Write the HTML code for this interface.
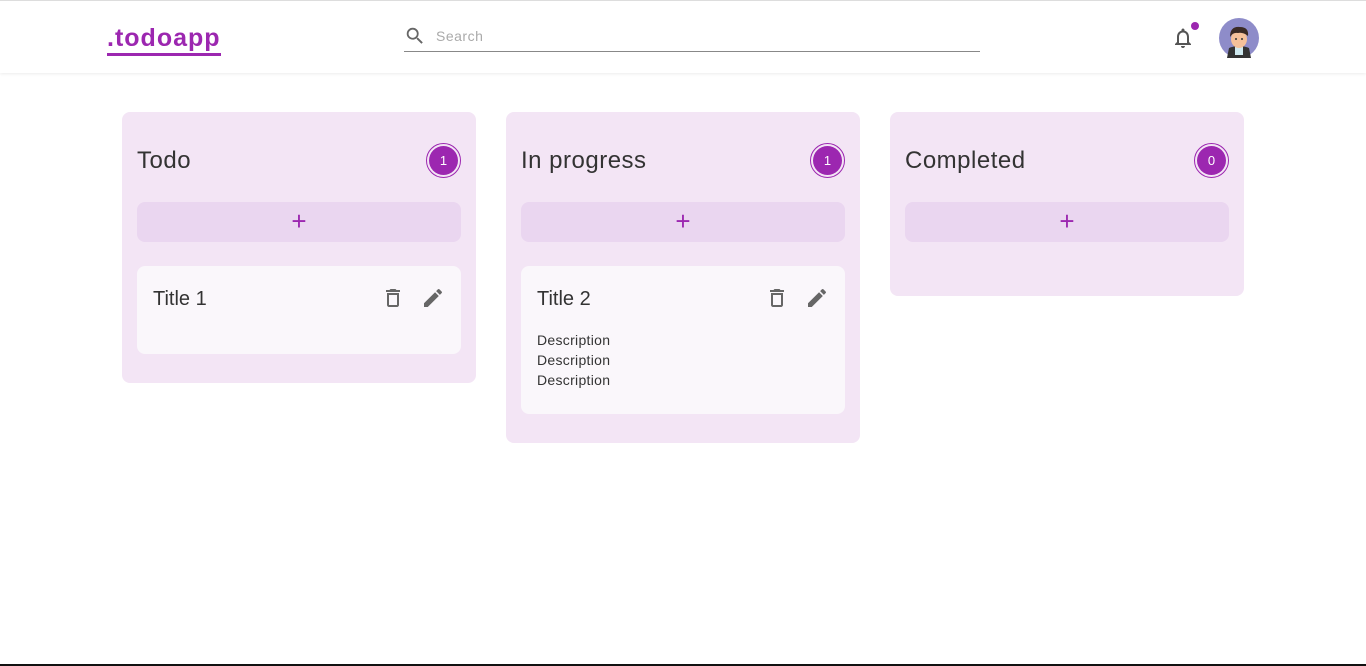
<!DOCTYPE html>
<html><head><style>
*{box-sizing:border-box;margin:0;padding:0}
body{width:1366px;height:666px;overflow:hidden;background:#fff;font-family:"Liberation Sans",sans-serif;position:relative;color:#222}
.hdr{position:absolute;left:0;top:0;width:1366px;height:73px;border-top:1px solid #ddd;box-shadow:0 1px 3px rgba(0,0,0,.08);background:#fff}
.logo{position:absolute;left:107px;top:22px;font-size:25px;font-weight:bold;color:#9c27b0;letter-spacing:1px;border-bottom:3px solid #9c27b0;line-height:30px;width:114px}
.search{position:absolute;left:404px;top:23px;width:576px;height:28px;border-bottom:1px solid #888}
.search span{position:absolute;left:32px;top:4px;font-size:14px;color:#aaa;letter-spacing:.5px}
.col{position:absolute;top:112px;width:354px;background:#f3e5f5;border-radius:8px}
.col h2{position:absolute;left:15px;top:35px;font-size:24px;font-weight:normal;color:#333;letter-spacing:.5px}
.badge{position:absolute;right:15px;top:31px;width:35px;height:35px;border-radius:50%;border:1px solid #9c27b0;padding:2px}
.badge div{width:29px;height:29px;border-radius:50%;background:#9c27b0;color:#fff;font-size:13px;text-align:center;line-height:29px}
.add{position:absolute;left:15px;top:90px;width:324px;height:40px;background:#ead6f0;border-radius:8px;color:#9c27b0;font-size:26px;text-align:center;line-height:38px}
.card{position:absolute;left:15px;top:154px;width:324px;background:#faf7fb;border-radius:8px}
.card h3{position:absolute;left:16px;top:22px;font-size:20px;font-weight:normal;color:#333}
.ic{position:absolute;top:20px}
.desc{position:absolute;left:16px;top:64px;font-size:14px;line-height:20px;color:#333;letter-spacing:.3px}
</style></head><body>
<div class="hdr">
<div class="logo">.todoapp</div>
<div class="search"><svg width="22" height="22" viewBox="0 0 24 24" style="position:absolute;left:0;top:1px"><path fill="#666" d="M15.5 14h-.79l-.28-.27A6.47 6.47 0 0 0 16 9.5 6.5 6.5 0 1 0 9.5 16c1.610 0 3.09-.59 4.23-1.57l.27.28v.79l5 4.99L20.49 19l-4.99-5zm-6 0C7.01 14 5 11.99 5 9.5S7.01 5 9.5 5 14 7.01 14 9.5 11.99 14 9.5 14z"/></svg><span>Search</span></div>
<svg width="24" height="24" viewBox="0 0 24 24" style="position:absolute;left:1171px;top:25px"><path fill="#555" d="M12 22c1.1 0 2-.9 2-2h-4a2 2 0 0 0 2 2zm6-6v-5c0-3.07-1.64-5.640-4.5-6.32V4c0-.83-.67-1.5-1.5-1.5s-1.5.67-1.5 1.5v.68C7.63 5.36 6 7.92 6 11v5l-2 2v1h16v-1l-2-2zm-2 1H8v-6c0-2.48 1.51-4.5 4-4.5s4 2.02 4 4.5v6z"/></svg>
<div style="position:absolute;left:1191px;top:21px;width:8px;height:8px;border-radius:50%;background:#9c27b0"></div>
<svg width="40" height="40" viewBox="0 0 40 40" style="position:absolute;left:1219px;top:17px"><circle cx="20" cy="20" r="20" fill="#8e8cc9"/><path d="M8 40 L10 30 Q20 26 30 30 L32 40Z" fill="#333"/><rect x="16" y="29" width="8" height="8" fill="#cfe9ef"/><ellipse cx="20" cy="21" rx="8" ry="9" fill="#f5c19a"/><path d="M11 19 Q11 8 21 9 Q30 9 29 18 Q24 14 19 15 Q14 14 11 19Z" fill="#3a2a24"/><circle cx="17" cy="21" r="1" fill="#333"/><circle cx="23" cy="21" r="1" fill="#333"/></svg>
</div>

<div class="col" style="left:122px;height:271px">
<h2>Todo</h2><div class="badge"><div>1</div></div><div class="add">+</div>
<div class="card" style="height:88px"><h3>Title 1</h3>
<svg class="ic" style="left:244px" width="24" height="24" viewBox="0 0 24 24"><path fill="#666" d="M6 19c0 1.1.9 2 2 2h8c1.1 0 2-.9 2-2V7H6v12zM8 9h8v10H8V9zm7.5-5l-1-1h-5l-1 1H5v2h14V4z"/></svg>
<svg class="ic" style="left:284px" width="24" height="24" viewBox="0 0 24 24"><path fill="#666" d="M3 17.25V21h3.75L17.81 9.94l-3.75-3.75L3 17.25zM20.71 7.04a1 1 0 0 0 0-1.41l-2.34-2.34a1 1 0 0 0-1.41 0l-1.83 1.83 3.75 3.75 1.83-1.83z"/></svg>
</div></div>

<div class="col" style="left:506px;height:331px">
<h2>In progress</h2><div class="badge"><div>1</div></div><div class="add">+</div>
<div class="card" style="height:148px"><h3>Title 2</h3>
<svg class="ic" style="left:244px" width="24" height="24" viewBox="0 0 24 24"><path fill="#666" d="M6 19c0 1.1.9 2 2 2h8c1.1 0 2-.9 2-2V7H6v12zM8 9h8v10H8V9zm7.5-5l-1-1h-5l-1 1H5v2h14V4z"/></svg>
<svg class="ic" style="left:284px" width="24" height="24" viewBox="0 0 24 24"><path fill="#666" d="M3 17.25V21h3.75L17.81 9.940l-3.75-3.75L3 17.25zM20.71 7.04a1 1 0 0 0 0-1.41l-2.34-2.34a1 1 0 0 0-1.41 0l-1.83 1.83 3.75 3.75 1.83-1.83z"/></svg>
<div class="desc">Description<br>Description<br>Description</div>
</div></div>

<div class="col" style="left:890px;height:184px">
<h2>Completed</h2><div class="badge"><div>0</div></div><div class="add">+</div>
</div>

<div style="position:absolute;left:0;top:664px;width:1366px;height:2px;background:#111"></div>
</body></html>
